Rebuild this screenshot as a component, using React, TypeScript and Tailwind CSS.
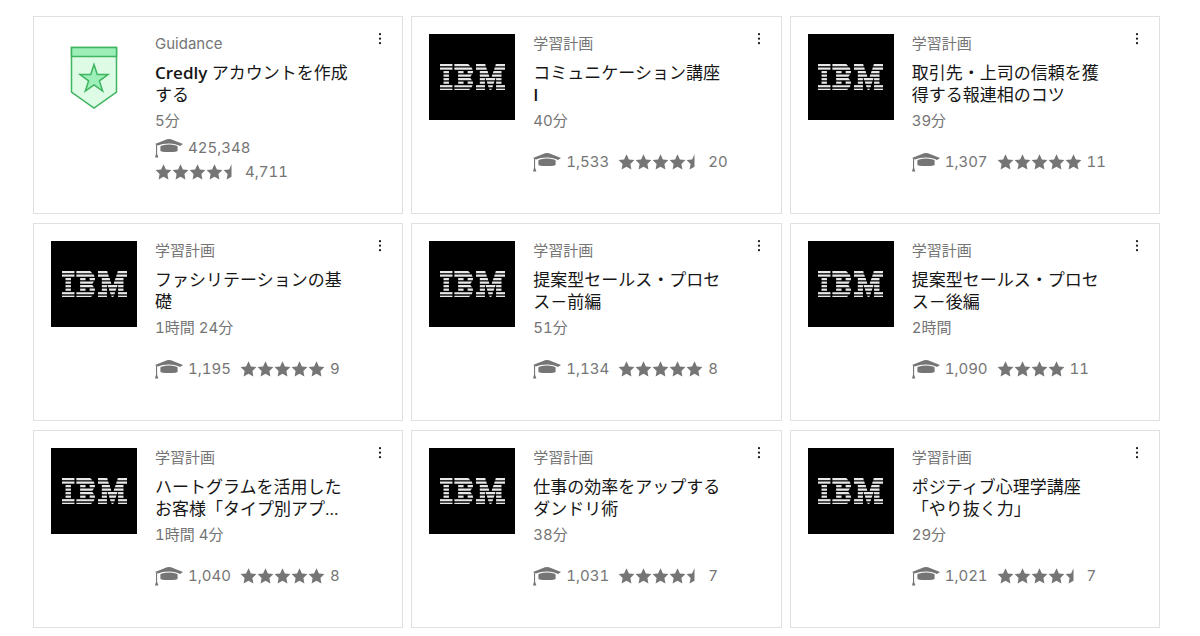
type Course = {
  kind: string;
  title: string;
  duration: string;
  learners: string;
  rating: number;
  reviews: string;
  badge?: boolean;
};

const courses: Course[] = [
  { kind: "Guidance", title: "Credly アカウントを作成する", duration: "5分", learners: "425,348", rating: 4.5, reviews: "4,711", badge: true },
  { kind: "学習計画", title: "コミュニケーション講座 I", duration: "40分", learners: "1,533", rating: 4.5, reviews: "20" },
  { kind: "学習計画", title: "取引先・上司の信頼を獲得する報連相のコツ", duration: "39分", learners: "1,307", rating: 5, reviews: "11" },
  { kind: "学習計画", title: "ファシリテーションの基礎", duration: "1時間 24分", learners: "1,195", rating: 5, reviews: "9" },
  { kind: "学習計画", title: "提案型セールス・プロセス－前編", duration: "51分", learners: "1,134", rating: 5, reviews: "8" },
  { kind: "学習計画", title: "提案型セールス・プロセス－後編", duration: "2時間", learners: "1,090", rating: 4, reviews: "11" },
  { kind: "学習計画", title: "ハートグラムを活用したお客様「タイプ別アプ...", duration: "1時間 4分", learners: "1,040", rating: 5, reviews: "8" },
  { kind: "学習計画", title: "仕事の効率をアップするダンドリ術", duration: "38分", learners: "1,031", rating: 4.5, reviews: "7" },
  { kind: "学習計画", title: "ポジティブ心理学講座「やり抜く力」", duration: "29分", learners: "1,021", rating: 4.5, reviews: "7" },
];

// eight stripes, each bar is [top left, top right, bottom right, bottom left]
const stripes: number[][][] = [
  [[0, 46, 46, 0], [53, 104, 112, 53], [133, 167, 169, 133], [206, 240, 240, 204]],
  [[0, 46, 46, 0], [53, 117, 120, 53], [133, 171, 173, 133], [202, 240, 240, 200]],
  [[13, 33, 33, 13], [67, 87, 87, 67], [102, 122, 121, 102], [147, 176, 178, 147], [198, 227, 227, 195]],
  [[13, 33, 33, 13], [67, 118, 112, 67], [147, 180, 182, 147], [193, 227, 227, 191]],
  [[13, 33, 33, 13], [67, 112, 118, 67], [147, 166, 166, 147], [168, 205, 203, 170], [207, 227, 227, 207]],
  [[13, 33, 33, 13], [67, 87, 87, 67], [102, 121, 122, 102], [147, 166, 166, 147], [173, 201, 198, 175], [207, 227, 227, 207]],
  [[0, 46, 46, 0], [53, 120, 117, 53], [133, 166, 166, 133], [177, 196, 194, 179], [207, 240, 240, 207]],
  [[0, 46, 46, 0], [53, 112, 104, 53], [133, 166, 166, 133], [181, 192, 187, 186], [207, 240, 240, 207]],
];

function IbmLogo() {
  return (
    <div className="flex size-[86px] items-center justify-center bg-black">
      <svg viewBox="0 0 240 99" className="w-[65px] text-[#e8e8e8]" fill="currentColor" role="img" aria-label="IBM">
        {stripes.map((bars, row) =>
          bars.map(([tl, tr, br, bl]) => (
            <path
              key={`${row}-${tl}`}
              d={`M${tl} ${row * 13}H${tr}L${br} ${row * 13 + 8}H${bl}Z`}
            />
          ))
        )}
      </svg>
    </div>
  );
}

function BadgeIcon() {
  return (
    <div className="flex size-[86px] items-center justify-center pt-[2px]">
      <svg viewBox="0 0 48 64" className="w-12" stroke="#3fb560" strokeWidth="1.5" aria-hidden="true">
        <path d="M1.5 1.5H46.5V46L24 62L1.5 46Z" fill="#defbe6" />
        <path d="M1.5 1.5H46.5V10.5H1.5Z" fill="#9deeb8" />
        <path
          d="M24 18.5L27.3 28.6H38L29.4 34.9L32.7 45L24 38.8L15.3 45L18.6 34.9L10 28.6H20.7Z"
          fill="#9deeb8"
        />
      </svg>
    </div>
  );
}

function CapIcon() {
  return (
    <svg viewBox="0 0 28 20" className="h-5 w-7 shrink-0" fill="currentColor" aria-hidden="true">
      <path d="M0 6L12 1.3Q14 .6 16 1.3L28 6L25 8Q21 5.4 14 5.4Q7 5.4 3 7.4Z" />
      <path d="M5.4 8.6Q5.4 7.8 7 7.4Q14 5.8 21 7.4Q22.6 7.8 22.6 8.6V12.8Q22.6 14 14 14T5.4 12.8Z" />
      <path d="M1 6.5H2.1V15.8L3.4 19.6H0L1 15.8Z" />
    </svg>
  );
}

function Stars({ rating }: { rating: number }) {
  const full = Math.floor(rating);
  return (
    <span className="flex shrink-0" role="img" aria-label={`${rating}`}>
      {Array.from({ length: Math.ceil(rating) }, (_, i) => (
        <svg key={i} viewBox="0 0 17 16" className="h-4 w-[17px]" fill="currentColor">
          {i < full ? (
            <path d="M8.5 .3L10.9 5.4L16.4 6.1L12.4 9.9L13.4 15.5L8.5 12.8L3.6 15.5L4.6 9.9L.6 6.1L6.1 5.4Z" />
          ) : (
            <path d="M8.5 .3V12.8L3.6 15.5L4.6 9.9L.6 6.1L6.1 5.4Z" />
          )}
        </svg>
      ))}
    </span>
  );
}

// latin words are set heavier than the kana and kanji around them
function Title({ text }: { text: string }) {
  return (
    <h3 className="mt-2 font-['Open_Sans','Noto_Sans_CJK_JP',sans-serif] text-[17px] leading-[22px] font-normal text-[#161616]">
      {text.split(/([A-Za-z]+)/).map((part, i) =>
        i % 2 ? (
          <span key={i} className="font-semibold">
            {part}
          </span>
        ) : (
          part
        )
      )}
    </h3>
  );
}

function CourseCard({ course }: { course: Course }) {
  return (
    <article className="flex min-h-[198px] items-start border border-[#e0e0e0] bg-white py-[17px] pr-[14px] pl-[17px]">
      {course.badge ? <BadgeIcon /> : <IbmLogo />}
      <div className="ml-[18px] min-w-0 flex-1 text-[15px] text-[#757575] tabular-nums">
        <p className="leading-5">{course.kind}</p>
        <Title text={course.title} />
        <p className="mt-[5px] leading-5">{course.duration}</p>
        <div className={course.badge ? "mt-[7px] leading-5" : "mt-[21px] flex leading-5"}>
          <span className="flex items-center gap-[5px]">
            <CapIcon />
            {course.learners}
          </span>
          <span className={course.badge ? "mt-1 flex items-center gap-[5px]" : "ml-[9px] flex items-center gap-[5px]"}>
            <Stars rating={course.rating} />
            {course.reviews}
          </span>
        </div>
      </div>
      <button type="button" aria-label="Options" className="-mt-px ml-[22px] flex h-3 w-4 justify-center text-[#161616]">
        <svg viewBox="0 0 4 12" className="h-3 w-1" fill="currentColor" aria-hidden="true">
          <circle cx="2" cy="1.2" r="1.1" />
          <circle cx="2" cy="5.7" r="1.1" />
          <circle cx="2" cy="10.2" r="1.1" />
        </svg>
      </button>
    </article>
  );
}

export default function App() {
  return (
    <main
      lang="ja"
      className="grid grid-cols-3 gap-x-2 gap-y-[9px] bg-white pt-4 pr-10 pl-[33px] font-['Inter','Noto_Sans_CJK_JP',sans-serif]"
    >
      {courses.map((course) => (
        <CourseCard key={course.title} course={course} />
      ))}
    </main>
  );
}
